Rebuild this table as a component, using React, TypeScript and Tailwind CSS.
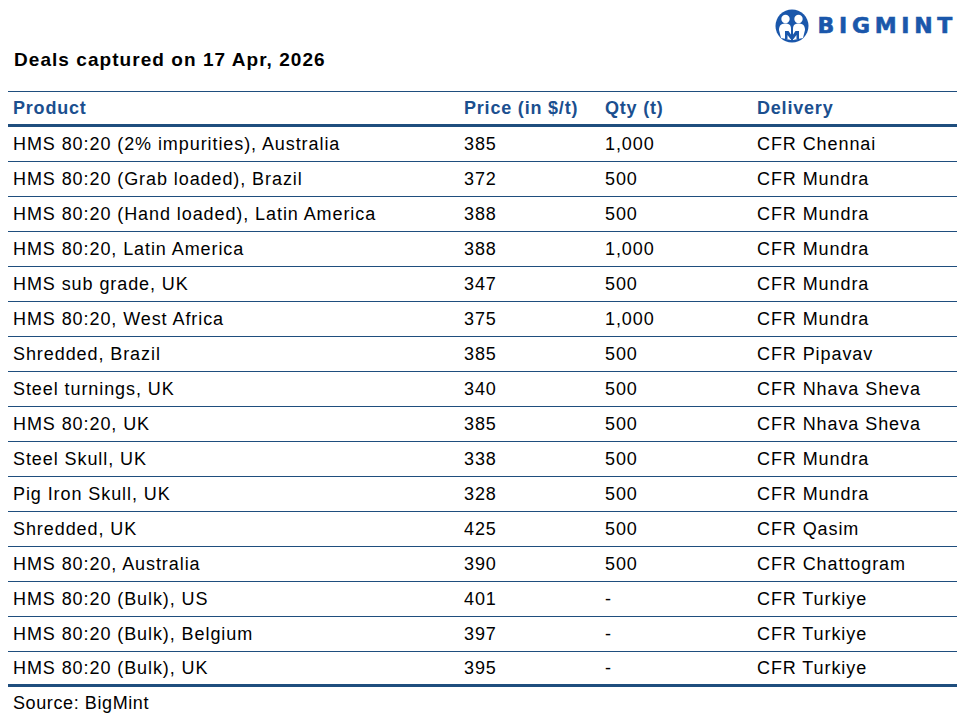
import React from 'react';

interface Deal {
  product: string;
  price: string;
  qty: string;
  delivery: string;
}

const deals: Deal[] = [
  { product: 'HMS 80:20 (2% impurities), Australia', price: '385', qty: '1,000', delivery: 'CFR Chennai' },
  { product: 'HMS 80:20 (Grab loaded), Brazil', price: '372', qty: '500', delivery: 'CFR Mundra' },
  { product: 'HMS 80:20 (Hand loaded), Latin America', price: '388', qty: '500', delivery: 'CFR Mundra' },
  { product: 'HMS 80:20, Latin America', price: '388', qty: '1,000', delivery: 'CFR Mundra' },
  { product: 'HMS sub grade, UK', price: '347', qty: '500', delivery: 'CFR Mundra' },
  { product: 'HMS 80:20, West Africa', price: '375', qty: '1,000', delivery: 'CFR Mundra' },
  { product: 'Shredded, Brazil', price: '385', qty: '500', delivery: 'CFR Pipavav' },
  { product: 'Steel turnings, UK', price: '340', qty: '500', delivery: 'CFR Nhava Sheva' },
  { product: 'HMS 80:20, UK', price: '385', qty: '500', delivery: 'CFR Nhava Sheva' },
  { product: 'Steel Skull, UK', price: '338', qty: '500', delivery: 'CFR Mundra' },
  { product: 'Pig Iron Skull, UK', price: '328', qty: '500', delivery: 'CFR Mundra' },
  { product: 'Shredded, UK', price: '425', qty: '500', delivery: 'CFR Qasim' },
  { product: 'HMS 80:20, Australia', price: '390', qty: '500', delivery: 'CFR Chattogram' },
  { product: 'HMS 80:20 (Bulk), US', price: '401', qty: '-', delivery: 'CFR Turkiye' },
  { product: 'HMS 80:20 (Bulk), Belgium', price: '397', qty: '-', delivery: 'CFR Turkiye' },
  { product: 'HMS 80:20 (Bulk), UK', price: '395', qty: '-', delivery: 'CFR Turkiye' },
];

const cols = 'grid grid-cols-[451px_141px_152px_1fr]';

// round blue mark with two figures
const LogoMark: React.FC = () => (
  <svg width="34" height="34" viewBox="-17 -17 34 34">
    <circle cx="0" cy="0" r="16.5" fill="#1a57ab" />
    <circle cx="-6.5" cy="-7" r="4.2" fill="#fff" />
    <circle cx="6.5" cy="-7" r="4.2" fill="#fff" />
    <path d="M-13 4 C-13 -2 -9 -2.5 -6.5 -2.5 C-4 -2.5 -1 -2 -1 3 L-1 14 L-11 12 Z" fill="#fff" />
    <path d="M13 4 C13 -2 9 -2.5 6.5 -2.5 C4 -2.5 1 -2 1 3 L1 14 L11 12 Z" fill="#fff" />
    <path d="M-7 13 L-7 5 L-3.5 5 L0 10 L3.5 5 L7 5 L7 13 L4.5 13 L4.5 9 L1.5 13 L-1.5 13 L-4.5 9 L-4.5 13 Z" fill="#1a57ab" />
  </svg>
);

const App: React.FC = () => {
  return (
    <div className="w-[965px] h-[722px] bg-white text-black font-['Liberation_Sans',Arial,sans-serif] overflow-hidden">
      <div className="flex justify-end items-center h-[50px] pr-[8px] pt-[1px] gap-[9px]">
        <LogoMark />
        <span className="font-['DejaVu_Sans',sans-serif] font-bold text-[22px] tracking-[4.7px] text-[#1a57ab] leading-none [-webkit-text-stroke:0.6px_#1a57ab]">
          BIGMINT
        </span>
      </div>

      <h1 className="pl-[14px] mt-[-1px] h-[20px] flex items-center text-[19px] tracking-[1.05px] font-bold leading-none">
        Deals captured on 17 Apr, 2026
      </h1>

      {/* table */}
      <div className="mx-[8px] w-[949px] mt-[22px] border-t border-[#1f4e7e]">
        <div className={`${cols} h-[35px] pt-[1px] items-center text-[18px] tracking-[0.8px] font-bold text-[#1b4f8f] border-b-[3px] border-[#1f4e7e]`}>
          <div className="pl-[5px]">Product</div>
          <div className="pl-[5px]">Price (in $/t)</div>
          <div className="pl-[5px]">Qty (t)</div>
          <div className="pl-[5px]">Delivery</div>
        </div>
        {deals.map((d, i) => (
          <div
            key={d.product}
            className={`${cols} h-[35px] items-center text-[18px] tracking-[0.92px] ${
              i === deals.length - 1 ? 'border-b-[3px]' : 'border-b'
            } border-[#1f4e7e]`}
          >
            <div className="pl-[5px] whitespace-nowrap">{d.product}</div>
            <div className="pl-[5px]">{d.price}</div>
            <div className="pl-[5px]">{d.qty}</div>
            <div className="pl-[5px] whitespace-nowrap">{d.delivery}</div>
          </div>
        ))}
        <div className="pl-[5px] h-[33px] flex items-center text-[18px] tracking-[0.6px]">Source: BigMint</div>
      </div>
    </div>
  );
};

export default App;
